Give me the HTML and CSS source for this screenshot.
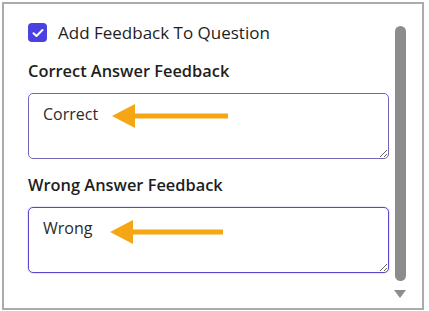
FILE: index.html
```html
<!DOCTYPE html>
<html>
<head>
<meta charset="utf-8">
<link rel="stylesheet" href="styles.css">
</head>
<body>
<div class="panel">
  <div class="content">
    <label class="check-row">
      <span class="checkbox">
        <svg width="12" height="10" viewBox="0 0 12 10"><path d="M1.5 5.2 L4.5 8 L10.5 2" fill="none" stroke="#fff" stroke-width="2" stroke-linecap="round" stroke-linejoin="round"/></svg>
      </span>
      <span class="check-text">Add Feedback To Question</span>
    </label>
    <div class="field-label first">Correct Answer Feedback</div>
    <div class="field">
      <textarea class="box box-a">Correct</textarea>
      <svg class="arrow arrow-a" width="120" height="28" viewBox="0 0 120 28"><polygon points="0,14 23,2 23,26" fill="#f5a614"/><rect x="21" y="11.5" width="95" height="5" fill="#f5a614"/></svg>
    </div>
    <div class="field-label second">Wrong Answer Feedback</div>
    <div class="field">
      <textarea class="box box-b">Wrong</textarea>
      <svg class="arrow arrow-b" width="120" height="28" viewBox="0 0 120 28"><polygon points="0,14 23,2 23,26" fill="#f5a614"/><rect x="21" y="11.5" width="92" height="5" fill="#f5a614"/></svg>
    </div>
  </div>
  <div class="scrollbar">
    <div class="thumb"></div>
    <div class="down"></div>
  </div>
</div>
</body>
</html>
```
FILE: styles.css
```css
html, body {
  margin: 0;
  padding: 0;
  background: #fff;
}
body {
  font-family: "Open Sans", "Noto Sans", sans-serif;
  color: #222;
}
.panel {
  margin: 2px;
  width: 422px;
  height: 308px;
  box-sizing: border-box;
  border: 2px solid #ababab;
  padding: 19px 16px 0 24px;
  display: flex;
  gap: 5px;
}
.content {
  flex: 1;
  display: flex;
  flex-direction: column;
}
.check-row {
  display: flex;
  align-items: center;
  gap: 11px;
  height: 19px;
}
.checkbox {
  width: 19px;
  height: 19px;
  border-radius: 4px;
  background: #4b41e1;
  display: flex;
  align-items: center;
  justify-content: center;
}
.check-text {
  font-size: 17px;
  color: #1e1e1e;
}
.field-label {
  font-size: 16.4px;
  font-weight: 600;
  line-height: 22px;
  color: #1e1e1e;
}
.field-label.first {
  margin-top: 18px;
}
.field-label.second {
  margin-top: 15px;
}
.field {
  position: relative;
  margin-top: 11px;
}
.box {
  display: block;
  width: 100%;
  height: 66px;
  box-sizing: border-box;
  margin: 0;
  border-radius: 5px;
  padding: 9px 14px;
  font-family: "Open Sans", "Noto Sans", sans-serif;
  font-size: 16px;
  line-height: 22px;
  color: #2a2a2a;
  background: #fff;
  outline: none;
}
.box-a {
  border: 1px solid #7366b6;
}
.box-b {
  border: 1px solid #5a48d2;
  box-shadow: 0 0 0 1px #ebe7fb;
}
.arrow {
  position: absolute;
}
.arrow-a {
  left: 84px;
  top: 9px;
}
.arrow-b {
  left: 82px;
  top: 11px;
}
.scrollbar {
  width: 12px;
  display: flex;
  flex-direction: column;
  align-items: center;
}
.thumb {
  margin-top: 3px;
  width: 11px;
  height: 255px;
  border-radius: 6px;
  background: #8c8c8c;
}
.down {
  margin-top: 9px;
  width: 0;
  height: 0;
  border-left: 6px solid transparent;
  border-right: 6px solid transparent;
  border-top: 8px solid #8c8c8c;
}
```
